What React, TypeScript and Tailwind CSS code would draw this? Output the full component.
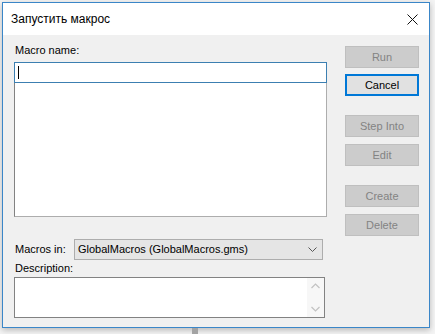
export default function App() {
  const btn =
    "w-[74px] h-[22px] flex items-center justify-center text-[11px] border";
  const disabled = `${btn} bg-[#cccccc] border-[#bfbfbf] text-[#838383]`;

  return (
    <div
      className="w-[435px] h-[334px] bg-[#f4f4f4] overflow-hidden pt-[2px] pl-[2px]"
      style={{ fontFamily: '"Liberation Sans", Arial, sans-serif' }}
    >
      {/* Window */}
      <div className="w-[428px] h-[326px] border border-[#3a86c8] bg-[#f0f0f0] flex flex-col shadow-[0_2px_6px_rgba(0,0,0,0.25)]">
        {/* Title bar */}
        <div className="h-[32px] bg-white flex items-center justify-between pl-[8px] pr-[10px] shrink-0">
          <span className="text-[12px] text-black">Запустить макрос</span>
          <svg width="11" height="11" viewBox="0 0 11 11" className="mr-[1px]">
            <path d="M0.5 0.5 L10.5 10.5 M10.5 0.5 L0.5 10.5" stroke="#111" strokeWidth="1" />
          </svg>
        </div>

        {/* Body */}
        <div className="flex flex-1">
          {/* Left column */}
          <div className="pl-[11px] pt-[9px] w-[342px] text-[11px] text-black">
            <div className="h-[13px] leading-[13px] pl-[1px]">Macro name:</div>
            <div className="mt-[5px] w-[313px] h-[21px] bg-white border border-[#3c7fb1] flex items-center pl-[3px]">
              <div className="w-[1px] h-[13px] bg-black" />
            </div>
            <div className="w-[313px] h-[134px] bg-white border border-t-0 border-[#adadad] border-l-[#828282]" />

            <div className="mt-[22px] flex items-center h-[21px]">
              <span className="w-[60px] pl-[1px]">Macros in:</span>
              <div className="w-[249px] h-[21px] bg-[#e5e5e5] border border-[#adadad] flex items-center justify-between pl-[3px] pr-[5px]">
                <span>GlobalMacros (GlobalMacros.gms)</span>
                <svg width="9" height="6" viewBox="0 0 9 6">
                  <path d="M0.5 0.5 L4.5 4.5 L8.5 0.5" stroke="#555" strokeWidth="1" fill="none" />
                </svg>
              </div>
            </div>

            <div className="mt-[2px] h-[13px] leading-[13px] pl-[1px]">Description:</div>
            <div className="mt-[2px] w-[311px] h-[41px] bg-white border border-[#828282] flex justify-end">
              <div className="w-[17px] h-full bg-[#f7f7f7] flex flex-col items-center justify-between py-[5px]">
                <svg width="9" height="6" viewBox="0 0 9 6">
                  <path d="M0.5 5 L4.5 1 L8.5 5" stroke="#c2c2c2" strokeWidth="1.2" fill="none" />
                </svg>
                <svg width="9" height="6" viewBox="0 0 9 6">
                  <path d="M0.5 1 L4.5 5 L8.5 1" stroke="#c2c2c2" strokeWidth="1.2" fill="none" />
                </svg>
              </div>
            </div>
          </div>

          {/* Right column */}
          <div className="pt-[11px] flex flex-col">
            <div className={disabled}>Run</div>
            <div className={`${btn} mt-[6px] bg-[#e1e1e1] border-2 border-[#0078d7] text-black`}>Cancel</div>
            <div className={`${disabled} mt-[19px]`}>Step Into</div>
            <div className={`${disabled} mt-[7px]`}>Edit</div>
            <div className={`${disabled} mt-[19px]`}>Create</div>
            <div className={`${disabled} mt-[7px]`}>Delete</div>
          </div>
        </div>
      </div>
      <div className="ml-[190px] w-[6px] h-[8px] bg-[#a3a3a3]" />
    </div>
  );
}
